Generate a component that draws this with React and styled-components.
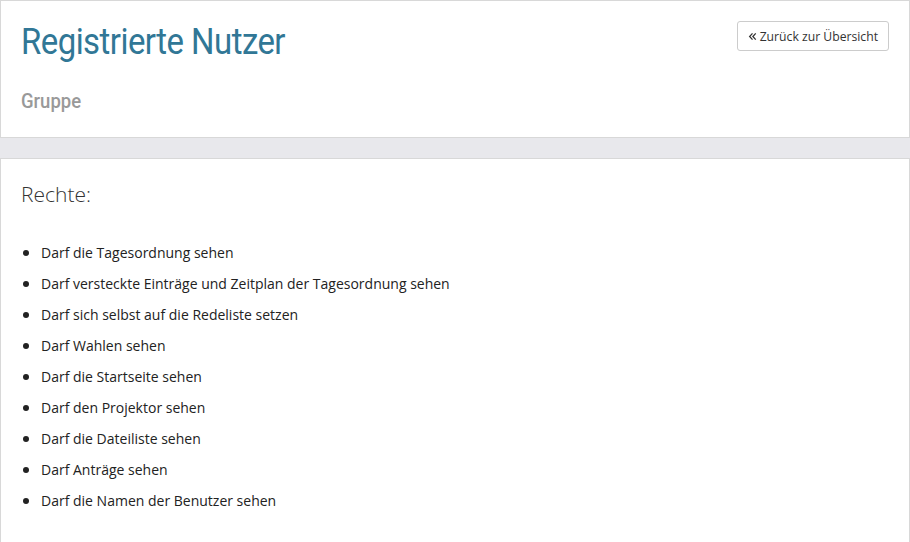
import React from "react";
import styled, { createGlobalStyle } from "styled-components";

const Global = createGlobalStyle`
  html, body {
    margin: 0;
    padding: 0;
    background: #e8e8ec;
    font-family: "Open Sans", "Liberation Sans", sans-serif;
    color: #222;
  }
`;

const Page = styled.div`
  width: 910px;
  height: 542px;
  display: flex;
  flex-direction: column;
  gap: 20px;
  background: #e8e8ec;
`;

const Card = styled.div`
  background: #fff;
  border: 1px solid #d8d8d8;
  box-sizing: border-box;
  padding: ${(p) => p.pad || "0"};
  flex: ${(p) => (p.grow ? 1 : "none")};
`;

const HeaderRow = styled.div`
  display: flex;
  justify-content: space-between;
  align-items: flex-start;
`;

const Title = styled.h1`
  margin: 0;
  font-family: "Roboto", "Liberation Sans", sans-serif;
  font-weight: 400;
  font-size: 37px;
  line-height: 40px;
  letter-spacing: -0.6px;
  color: #317796;
  transform: scaleX(0.89);
  transform-origin: left center;
`;

const SubTitle = styled.h2`
  margin: 27px 0 0;
  font-family: "Roboto", "Liberation Sans", sans-serif;
  font-weight: 500;
  font-size: 21px;
  line-height: 24px;
  color: #999;
  transform: scaleX(0.88);
  transform-origin: left center;
`;

const BackButton = styled.button`
  margin-top: -1px;
  display: flex;
  align-items: center;
  gap: 3px;
  height: 30px;
  padding: 0 10px;
  background: #fff;
  border: 1px solid #ccc;
  border-radius: 3px;
  font-family: "Open Sans", "Liberation Sans", sans-serif;
  font-size: 12.2px;
  color: #333;
  cursor: pointer;
`;

const SectionTitle = styled.h3`
  margin: 0;
  font-family: "Open Sans", "Liberation Sans", sans-serif;
  font-weight: 300;
  font-size: 21px;
  line-height: 28px;
  color: #333;
`;

const List = styled.ul`
  margin: 34px 0 0;
  padding: 0 0 0 20px;
  list-style: disc;
`;

const Item = styled.li`
  font-size: 14px;
  line-height: 20px;
  color: #222;
  margin-bottom: 10px;
  &::marker {
    font-size: 16px;
  }
`;

const Chevrons = () => (
  <svg width="9" height="9" viewBox="0 0 10 10" fill="none" stroke="#333" strokeWidth="1.4">
    <path d="M5 1.5 L1.8 5 L5 8.5" />
    <path d="M8.6 1.5 L5.4 5 L8.6 8.5" />
  </svg>
);

const rights = [
  "Darf die Tagesordnung sehen",
  "Darf versteckte Einträge und Zeitplan der Tagesordnung sehen",
  "Darf sich selbst auf die Redeliste setzen",
  "Darf Wahlen sehen",
  "Darf die Startseite sehen",
  "Darf den Projektor sehen",
  "Darf die Dateiliste sehen",
  "Darf Anträge sehen",
  "Darf die Namen der Benutzer sehen",
];

export default function App() {
  return (
    <>
      <Global />
      <Page>
        <Card pad="21px 20px 24px 20px">
          <HeaderRow>
            <Title>Registrierte Nutzer</Title>
            <BackButton>
              <Chevrons />
              Zurück zur Übersicht
            </BackButton>
          </HeaderRow>
          <SubTitle>Gruppe</SubTitle>
        </Card>
        <Card pad="21px 20px" grow>
          <SectionTitle>Rechte:</SectionTitle>
          <List>
            {rights.map((r) => (
              <Item key={r}>{r}</Item>
            ))}
          </List>
        </Card>
      </Page>
    </>
  );
}
